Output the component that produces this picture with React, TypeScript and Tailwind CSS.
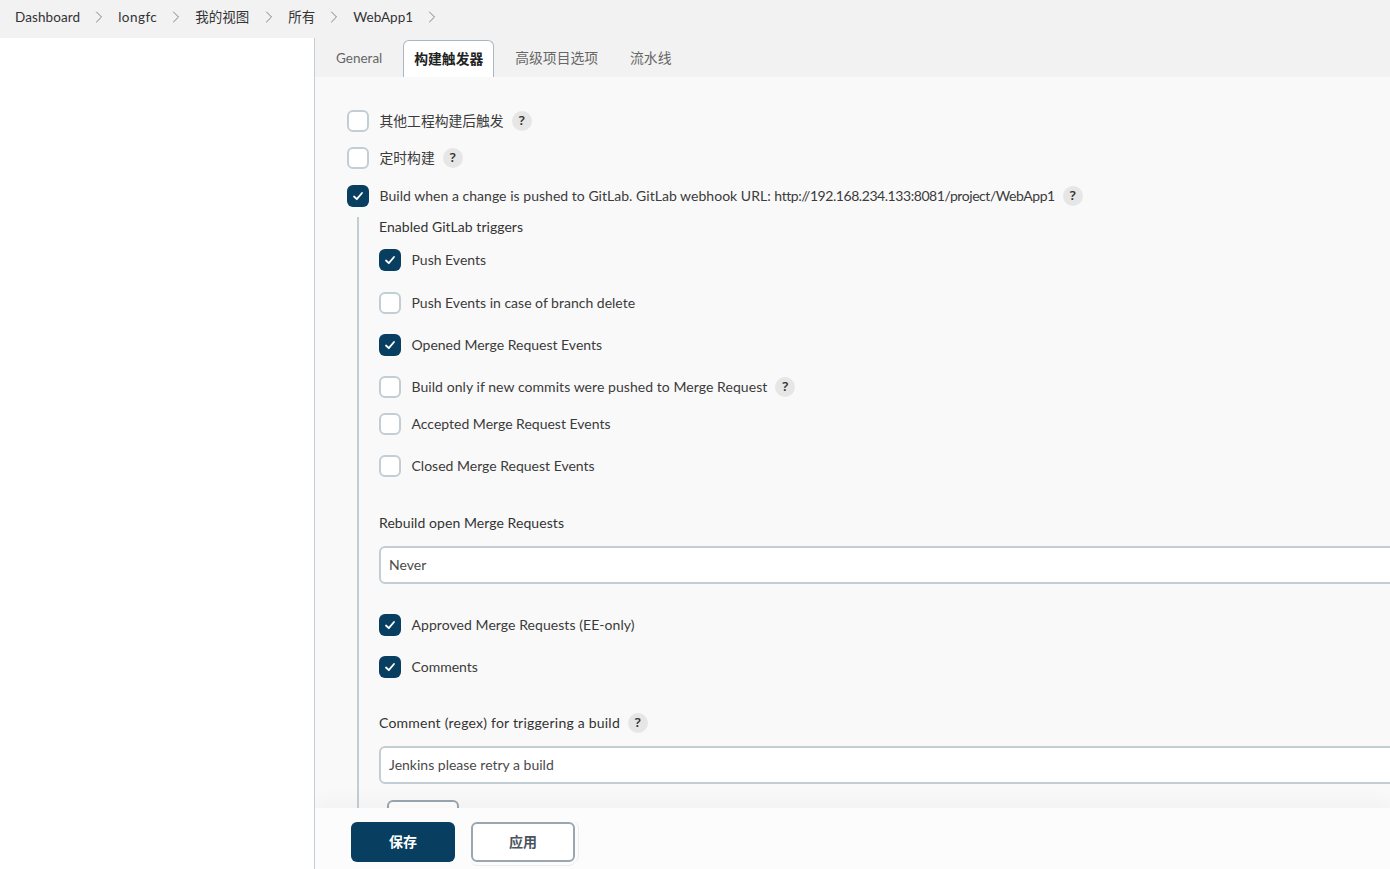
import React from "react";
import { ChevronRight } from "lucide-react";

const FONT = "font-['Lato','Noto_Sans_CJK_SC',sans-serif]";
const CRUMBS = [
    { label: "Dashboard", className: "tracking-[0.1px]" },
    { label: "longfc", className: "tracking-[0.45px]" },
    { label: "我的视图", className: "pr-[1px]" },
    { label: "所有", className: "" },
    { label: "WebApp1", className: "" },
];

function CheckBox({ checked }: { checked?: boolean }) {
    if (checked) {
        return (
            <span className="flex h-[22px] w-[22px] shrink-0 items-center justify-center rounded-[6px] bg-[#083e60]">
                <svg width="12" height="12" viewBox="0 0 12 12" fill="none">
                    <path d="M2 6.5 L4.8 9.2 L10 3" stroke="white" strokeWidth="1.8" strokeLinecap="round" strokeLinejoin="round" />
                </svg>
            </span>
        );
    }
    return <span className="h-[22px] w-[22px] shrink-0 rounded-[6px] border-2 border-[#c3ced4] bg-white" />;
}

function Help() {
    return (
        <span className="flex h-5 w-5 shrink-0 items-center justify-center rounded-full bg-[#e6e6e6] font-['Noto_Sans',sans-serif] text-[13px] font-semibold text-[#333]">
            ?
        </span>
    );
}

function CheckRow({ label, checked, help, className, textClass = "pb-[2px]" }: { label: React.ReactNode; checked?: boolean; help?: boolean; className?: string; textClass?: string }) {
    return (
        <div className={`flex h-[22px] items-center ${className ?? ""}`}>
            <CheckBox checked={checked} />
            <span className={`ml-[10.5px] whitespace-nowrap text-[#3b3b3b] ${textClass}`}>{label}</span>
            {help && <span className="ml-2"><Help /></span>}
        </div>
    );
}

function TextBox({ value, className }: { value: string; className?: string }) {
    return (
        <div className={`flex h-[38px] w-[1100px] items-center rounded-[6px] border-2 border-[#c3ced4] bg-white pb-[2px] pl-2 text-[#4a4a4a] ${className ?? ""}`}>
            {value}
        </div>
    );
}

export default function App() {
    return (
        <div className={`${FONT} relative h-[869px] w-[1390px] overflow-hidden bg-white text-[14px] text-[#333]`}>
            {/* breadcrumb */}
            <div className="flex h-[38px] items-center bg-[#f2f2f2] pb-[3px] pl-[15px] text-[13.5px]">
                {CRUMBS.map((crumb) => (
                    <div key={crumb.label} className="flex items-center">
                        <span className={`text-[#333] ${crumb.className}`}>{crumb.label}</span>
                        <ChevronRight className="mx-[9px] mb-[2px] h-5 w-5 text-[#777]" strokeWidth={1.1} />
                    </div>
                ))}
            </div>

            <div className="flex h-[831px]">
                <div className="w-[314px] shrink-0 bg-white" />
                <div className="relative flex-1 overflow-hidden border-l border-[#c3ced4] bg-[#f9f9f9]">
                    {/* tabs */}
                    <div className="flex h-[39px] items-end bg-[#f2f2f2] pl-[21px] text-[13.8px] text-[#666]">
                        <div className="flex h-[37px] items-center text-[13.5px]">General</div>
                        <div className="ml-[21px] flex h-[37px] items-center rounded-t-[6px] border border-b-0 border-[#a9b7c0] bg-white px-[10px] font-semibold text-[#222]">
                            构建触发器
                        </div>
                        <div className="ml-[21px] flex h-[37px] items-center">高级项目选项</div>
                        <div className="ml-[32px] flex h-[37px] items-center">流水线</div>
                    </div>

                    {/* form */}
                    <div className="pl-8 pt-[33px]">
                        <CheckRow label="其他工程构建后触发" help textClass="" className="text-[13.8px]" />
                        <CheckRow label="定时构建" help textClass="" className="mt-[15px] text-[13.8px]" />
                        <CheckRow
                            checked
                            help
                            label={
                                <>
                                    <span className="tracking-[0.03px]">Build when a change is pushed to GitLab. GitLab webhook URL: </span>
                                    <span className="tracking-[-0.44px]">http://192.168.234.133:8081/project/WebApp1</span>
                                </>
                            }
                            className="mt-[16px]"
                        />

                        <div className="ml-[10px] mt-[10px] border-l-2 border-[#c3ced4] pl-5">
                            <div className="flex h-5 items-center pb-[2px] tracking-[0.04px]">Enabled GitLab triggers</div>
                            <CheckRow checked label="Push Events" className="mt-[12px]" />
                            <CheckRow label="Push Events in case of branch delete" className="mt-[21px]" />
                            <CheckRow checked label="Opened Merge Request Events" className="mt-[20px]" />
                            <CheckRow label="Build only if new commits were pushed to Merge Request" help className="mt-[20px] tracking-[0.06px]" />
                            <CheckRow label="Accepted Merge Request Events" className="mt-[15px]" />
                            <CheckRow label="Closed Merge Request Events" className="mt-[20px]" />

                            <div className="mt-[36px] flex h-5 items-center pb-[2px] tracking-[0.07px]">Rebuild open Merge Requests</div>
                            <TextBox value="Never" className="mt-[13px]" />

                            <CheckRow checked label="Approved Merge Requests (EE-only)" className="mt-[30px] tracking-[0.06px]" />
                            <CheckRow checked label="Comments" className="mt-[20px]" />

                            <div className="mt-[35px] flex h-5 items-center tracking-[0.22px]">
                                <span className="pb-[2px]">Comment (regex) for triggering a build</span>
                                <span className="ml-2"><Help /></span>
                            </div>
                            <TextBox value="Jenkins please retry a build" className="mt-[13px]" />
                            <div className="ml-2 mt-[16px] h-10 w-[72px] rounded-[6px] border-2 border-[#9aa7b0] bg-white" />
                        </div>
                    </div>

                    {/* sticky save bar */}
                    <div className="absolute bottom-0 left-0 right-0 flex h-[61px] gap-4 bg-[#fcfcfc] pl-9 pt-[14px] shadow-[0_-8px_16px_rgba(0,0,0,0.03)]">
                        <button className="h-10 w-[104px] rounded-[6px] bg-[#083e60] pb-[2px] font-bold text-white">保存</button>
                        <button className="h-10 w-[104px] rounded-[6px] border-2 border-[#9aa7b0] bg-white pb-[2px] font-bold text-[#4a545c] shadow-[3px_0_0_0_#fcfcfc,4px_0_0_0_#e8eef3,0_3px_0_0_#fcfcfc,0_4px_0_0_#e8eef3]">应用</button>
                    </div>
                </div>
            </div>
        </div>
    );
}
